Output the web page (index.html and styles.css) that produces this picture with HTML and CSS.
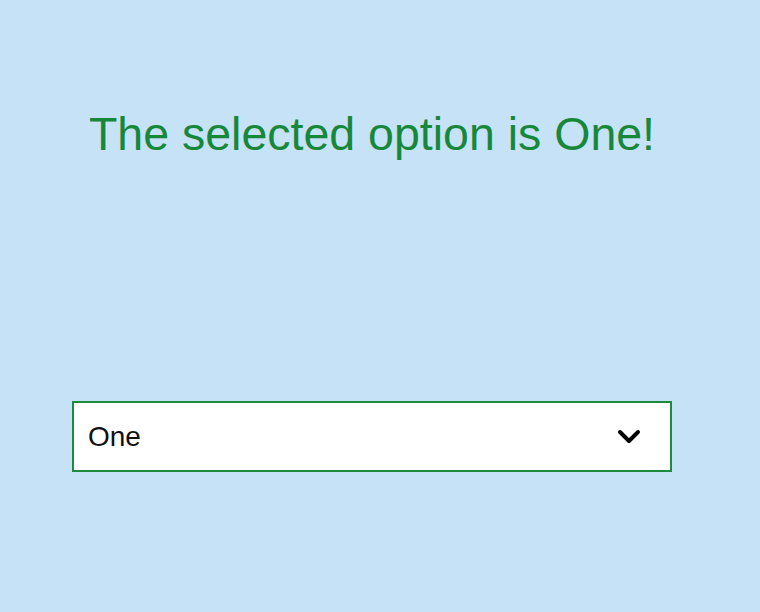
FILE: index.html
```html
<!DOCTYPE html>
<html>
<head>
<meta charset="utf-8">
<link rel="stylesheet" href="styles.css">
</head>
<body>
<main class="app">
  <h1 class="title">The selected option is One!</h1>
  <div class="select">
    <span class="select-value">One</span>
    <svg class="chevron" width="26" height="18" viewBox="0 0 26 18"><path d="M4 4 L13 13 L22 4" fill="none" stroke="#000" stroke-width="4" stroke-linecap="round" stroke-linejoin="round"/></svg>
  </div>
</main>
</body>
</html>
```
FILE: styles.css
```css
html, body {
  margin: 0;
  padding: 0;
  background: #c5e2f7;
  height: 100%;
}
.app {
  width: 600px;
  margin-left: 72px;
  padding-top: 104px;
  display: flex;
  flex-direction: column;
  font-family: "Liberation Sans", Arial, sans-serif;
}
.title {
  margin: 0;
  text-align: center;
  font-weight: normal;
  font-size: 46.5px;
  line-height: 60px;
  color: #17873a;
}
.select {
  margin-top: 237px;
  height: 67px;
  border: 2px solid #1e8a3c;
  background: #fff;
  display: flex;
  align-items: center;
  justify-content: space-between;
  padding: 0 28px 0 14px;
}
.select-value {
  font-size: 28px;
  color: #111;
}
.chevron {
  display: block;
}
```
